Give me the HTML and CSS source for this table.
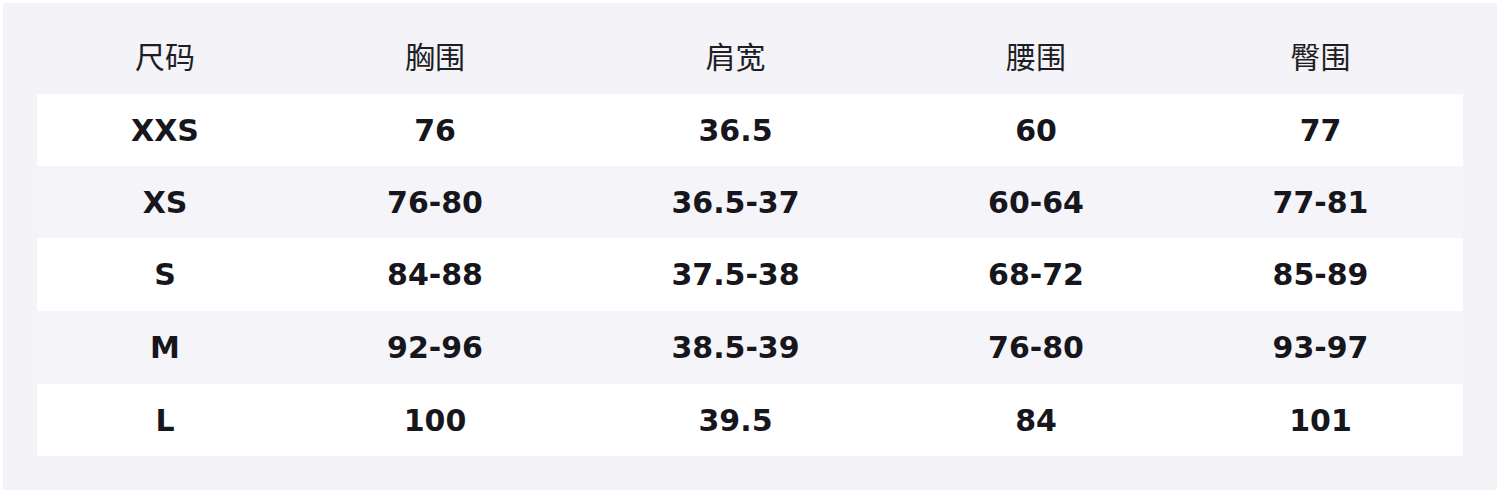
FILE: index.html
```html
<!DOCTYPE html>
<html lang="zh">
<head>
<meta charset="utf-8">
<title>尺码表</title>
<link rel="stylesheet" href="styles.css">
</head>
<body>
<div class="panel">
  <table class="size-table">
    <colgroup>
      <col class="c1"><col class="c2"><col class="c3"><col class="c4"><col class="c5">
    </colgroup>
    <thead>
      <tr><th>尺码</th><th>胸围</th><th>肩宽</th><th>腰围</th><th>臀围</th></tr>
    </thead>
    <tbody>
      <tr class="odd"><td>XXS</td><td>76</td><td>36.5</td><td>60</td><td>77</td></tr>
      <tr class="even"><td>XS</td><td>76-80</td><td>36.5-37</td><td>60-64</td><td>77-81</td></tr>
      <tr class="odd"><td>S</td><td>84-88</td><td>37.5-38</td><td>68-72</td><td>85-89</td></tr>
      <tr class="even"><td>M</td><td>92-96</td><td>38.5-39</td><td>76-80</td><td>93-97</td></tr>
      <tr class="odd"><td>L</td><td>100</td><td>39.5</td><td>84</td><td>101</td></tr>
    </tbody>
  </table>
</div>
</body>
</html>
```

FILE: styles.css
```css
html, body {
  margin: 0;
  padding: 0;
  background: #ffffff;
}
.panel {
  margin: 3px;
  width: 1494px;
  height: 487px;
  box-sizing: border-box;
  padding: 19px 34px 35px 34px;
  background: #f3f3f8;
}
.size-table {
  width: 1426px;
  border-collapse: collapse;
  table-layout: fixed;
}
.c1 { width: 256px; }
.c2 { width: 284px; }
.c3 { width: 317px; }
.c4 { width: 284px; }
.c5 { width: 285px; }
.size-table th,
.size-table td {
  padding: 0;
  text-align: center;
  vertical-align: middle;
}
.size-table th {
  height: 72px;
  box-sizing: border-box;
  padding-bottom: 7px;
  font-family: "Noto Sans CJK SC", "DejaVu Sans", sans-serif;
  font-weight: 400;
  font-size: 30px;
  color: #1e1e24;
}
.size-table td {
  height: 72px;
  font-family: "DejaVu Sans", sans-serif;
  font-weight: 700;
  font-size: 30px;
  color: #16161c;
}
.size-table tbody tr:nth-child(3) td,
.size-table tbody tr:nth-child(4) td {
  height: 73px;
}
.size-table tr.odd { background: #ffffff; }
.size-table tr.even { background: #f4f4f9; }
```
